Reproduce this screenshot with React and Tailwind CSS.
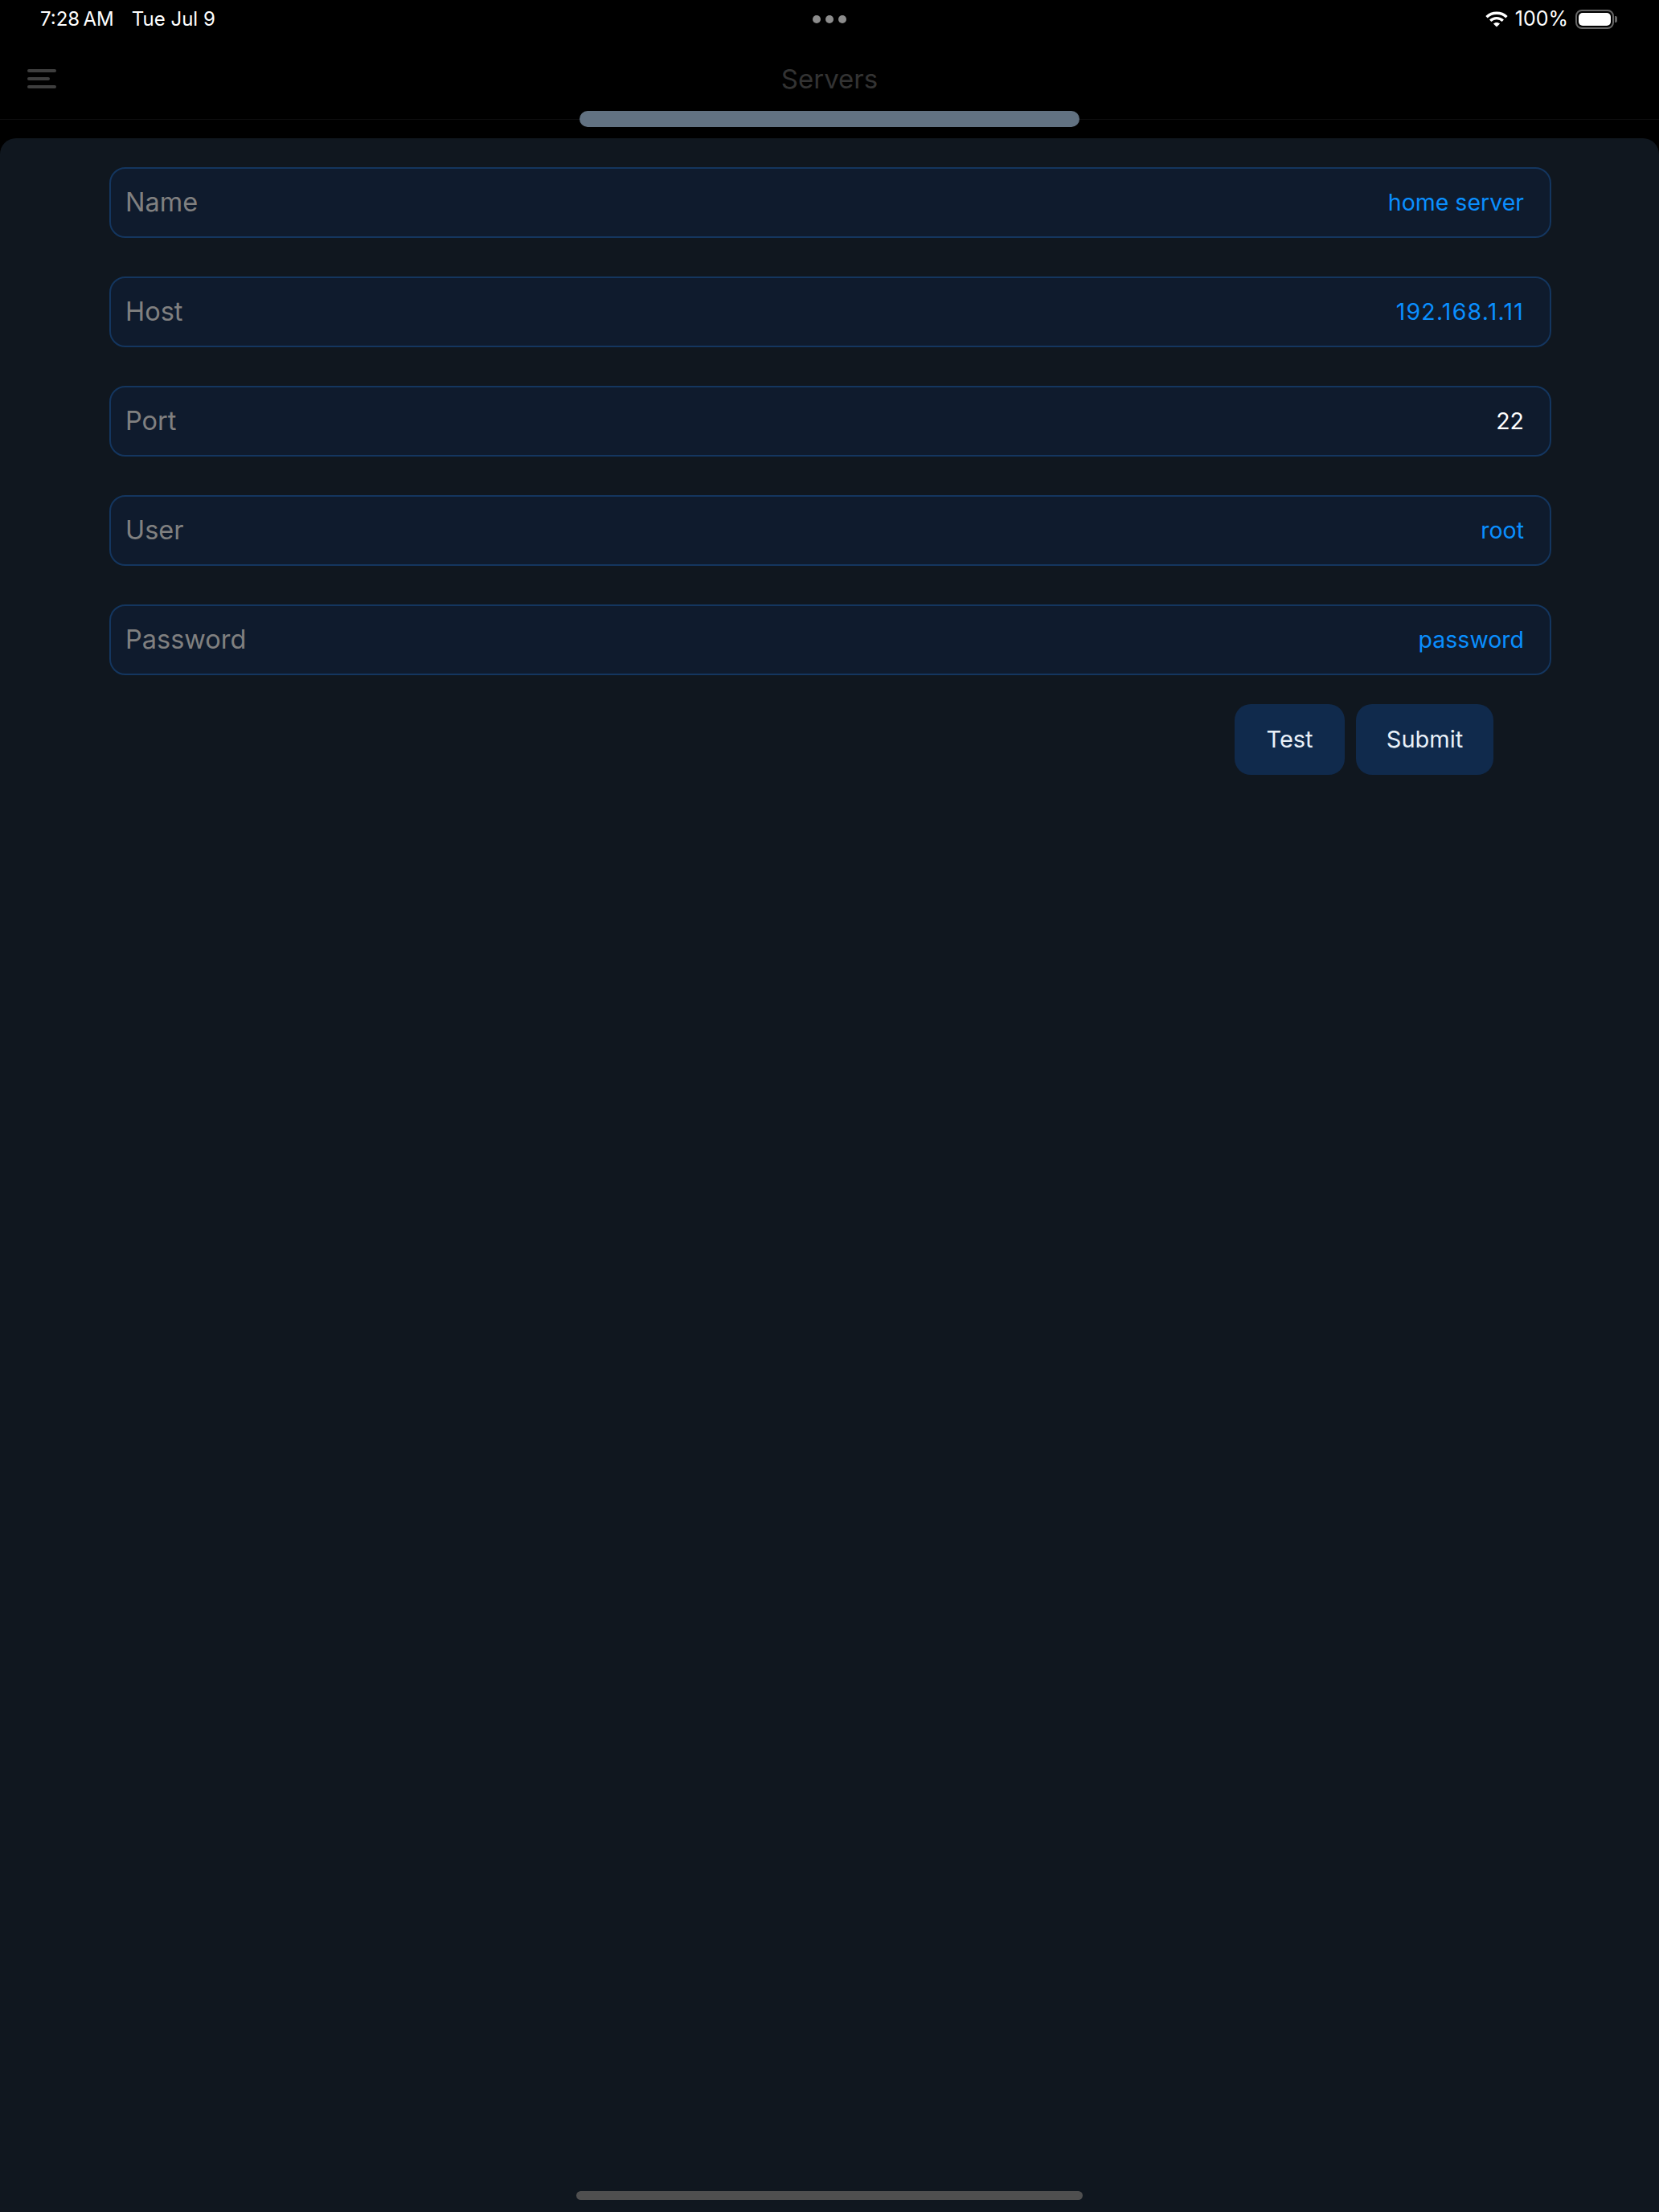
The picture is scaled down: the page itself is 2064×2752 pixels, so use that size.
const fields = [
  { label: "Name", value: "home server" },
  { label: "Host", value: "192.168.1.11", spaced: true },
  { label: "Port", value: "22", filled: true },
  { label: "User", value: "root" },
  { label: "Password", value: "password" },
];

function Wifi() {
  return (
    <svg width="28" height="20" viewBox="0 0 28 20" fill="none" stroke="#fff" strokeWidth="3.4">
      <path d="M1.5 7.2C8.4 .6 19.6 .6 26.5 7.2" />
      <path d="M6.2 11.8C10.6 7.6 17.4 7.6 21.8 11.8" />
      <path d="M14 19.6L9.9 15.5C12.2 13.4 15.8 13.4 18.1 15.5Z" fill="#fff" stroke="none" />
    </svg>
  );
}

function Battery() {
  return (
    <div className="flex items-center gap-[1px]">
      <div className="h-[24px] w-[48px] rounded-[8px] border-2 border-[#666666] p-[2px]">
        <div className="h-full w-full rounded-[5px] bg-white" />
      </div>
      <div className="h-[8px] w-[3px] rounded-r-[2px] bg-[#666666]" />
    </div>
  );
}

function StatusBar() {
  return (
    <div className="relative flex h-[48px] items-center justify-between pl-[50px] pr-[52px] text-white">
      <div className="flex gap-[22px] text-[24px]">
        <span>7:28{"\u2009"}AM</span>
        <span>Tue Jul 9</span>
      </div>
      <div className="absolute left-[1011px] top-[19px] flex gap-[6px]">
        <div className="size-[10px] rounded-full bg-[#8c8c8c]" />
        <div className="size-[10px] rounded-full bg-[#8c8c8c]" />
        <div className="size-[10px] rounded-full bg-[#8c8c8c]" />
      </div>
      <div className="flex items-center gap-[9px] text-[25px]">
        <Wifi />
        <span>100%</span>
        <Battery />
      </div>
    </div>
  );
}

function NavBar() {
  return (
    <div className="relative flex h-[101px] items-start justify-center border-b border-[#0e0e10] bg-black">
      <div className="absolute left-[34px] top-[38px] flex w-[36px] flex-col gap-[6px]">
        <div className="h-[4px] w-[36px] rounded-full bg-[#3e3e3e]" />
        <div className="h-[4px] w-[28px] rounded-full bg-[#3e3e3e]" />
        <div className="h-[4px] w-[36px] rounded-full bg-[#3e3e3e]" />
      </div>
      <span className="mt-[30px] text-[33px] leading-[40px] text-[#333333]">Servers</span>
      <div className="absolute left-[721px] top-[90px] h-[20px] w-[622px] rounded-[10px] bg-[#627282]" />
    </div>
  );
}

function Field({ label, value, filled, spaced }) {
  return (
    <div className="flex h-[88px] items-center justify-between rounded-[20px] border-2 border-[#14365f] bg-[#0f1b2d] pl-[18px] pr-[32px]">
      <span className="text-[32.5px] text-[#808080]">{label}</span>
      <span className={`text-[28.5px] ${filled ? "text-white" : "text-[#0a8fff]"} ${spaced ? "tracking-[1.2px]" : ""}`}>{value}</span>
    </div>
  );
}

export default function App() {
  return (
    <div className="flex h-[2752px] flex-col bg-black font-['Inter',sans-serif]">
      <StatusBar />
      <NavBar />
      <div className="mt-[23px] flex flex-1 flex-col rounded-t-[20px] bg-[#10171f] pt-[36px]">
        <div className="flex flex-col gap-[48px] pl-[136px] pr-[134px]">
          {fields.map((f) => (
            <Field key={f.label} {...f} />
          ))}
        </div>
        <div className="mt-[36px] flex justify-end gap-[14px] pr-[206px]">
          <button className="h-[88px] w-[137px] rounded-[20px] bg-[#102a4c] text-[29px] text-[#e8f0f8]">Test</button>
          <button className="h-[88px] w-[171px] rounded-[20px] bg-[#102a4c] text-[29px] text-[#e8f0f8]">Submit</button>
        </div>
        <div className="mx-auto mb-[15px] mt-auto h-[11px] w-[630px] rounded-full bg-[#4f4f4f]" />
      </div>
    </div>
  );
}
